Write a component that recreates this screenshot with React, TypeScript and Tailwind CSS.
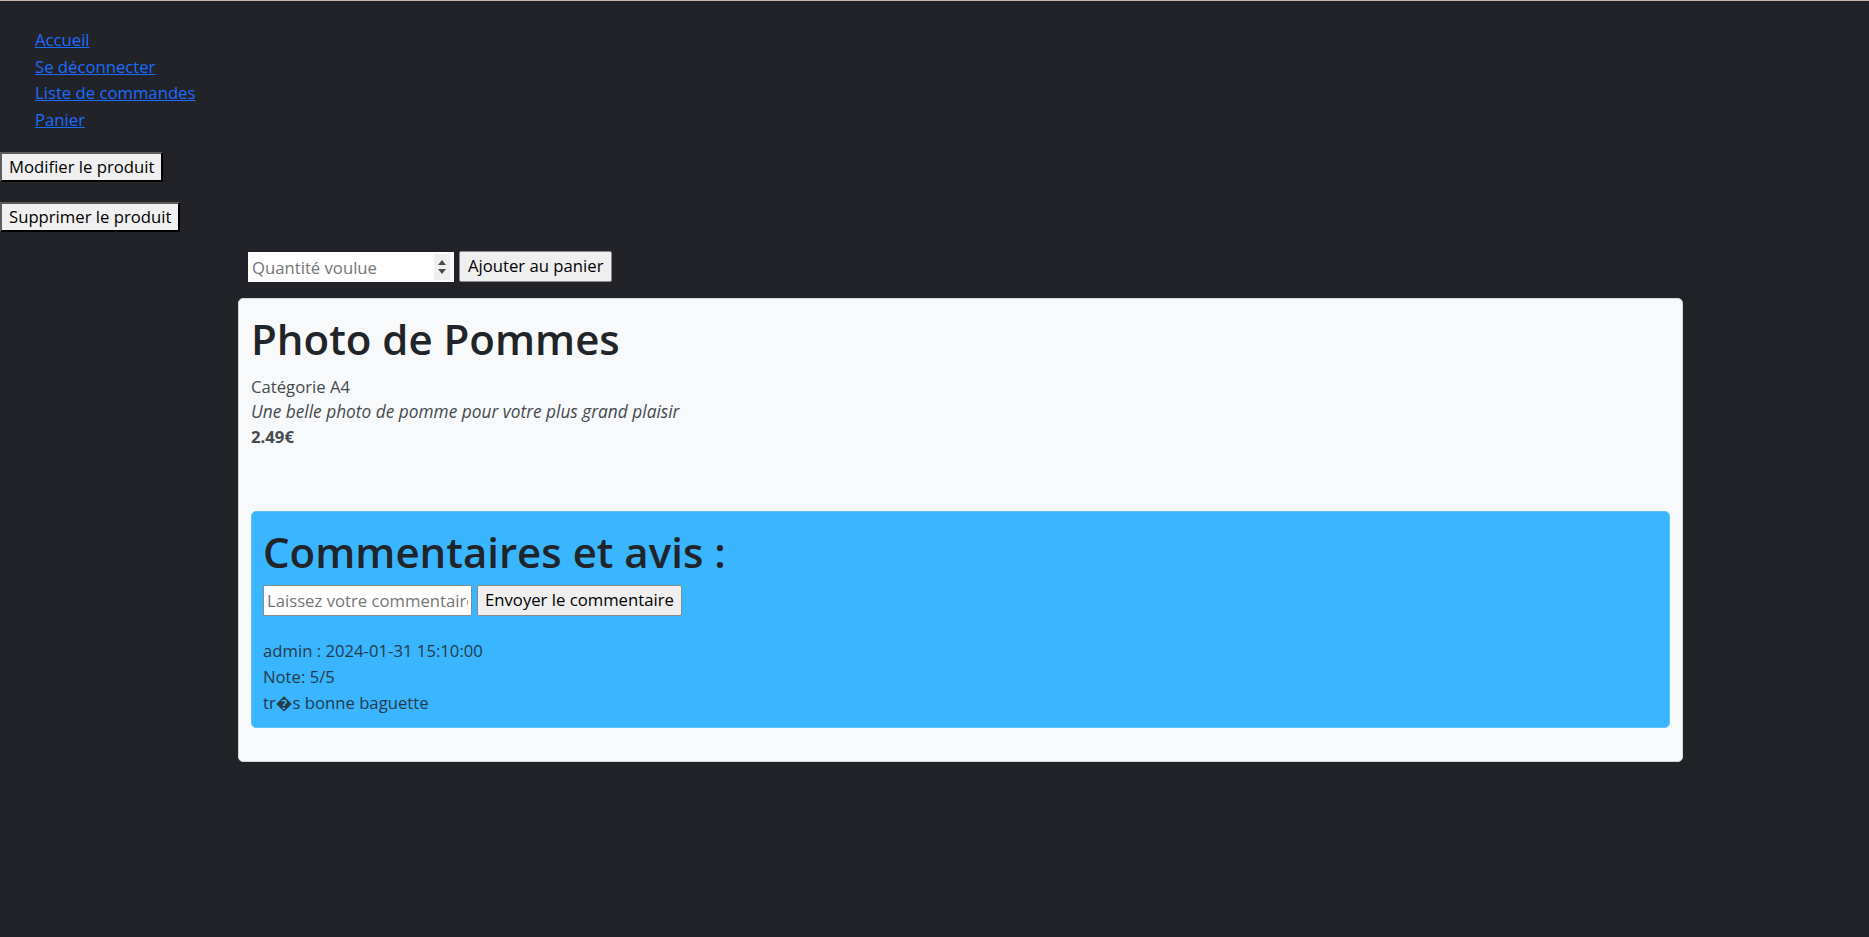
export default function App() {
  return (
    <div className="min-h-screen bg-[#222329] border-t border-[#c9b5ae] font-['Open_Sans',sans-serif] text-[16.7px] leading-[26.5px] text-[#212529]">
      <ul className="pt-[26px] pl-[35px] mb-[19px]">
        <li><a href="#" className="text-[#1a6dfd] underline">Accueil</a></li>
        <li><a href="#" className="text-[#1a6dfd] underline">Se déconnecter</a></li>
        <li><a href="#" className="text-[#1a6dfd] underline">Liste de commandes</a></li>
        <li><a href="#" className="text-[#1a6dfd] underline">Panier</a></li>
      </ul>

      <form className="mb-[20px]">
        <button type="button" className="h-[30px] px-[7px] bg-[#f0f0f0] text-black border-2 border-t-[#5c5c5c] border-l-[#5c5c5c] border-r-black border-b-black leading-none">
          Modifier le produit
        </button>
      </form>
      <form className="mb-[20px]">
        <button type="button" className="h-[30px] px-[7px] bg-[#f0f0f0] text-black border-2 border-t-[#5c5c5c] border-l-[#5c5c5c] border-r-black border-b-black leading-none">
          Supprimer le produit
        </button>
      </form>

      <div className="ml-[238px] w-[1445px]">
        <form className="ml-[10px] mb-[16px] flex gap-[5px]">
          <div className="relative w-[206px] h-[30px] bg-white">
            <input
              type="text"
              placeholder="Quantité voulue"
              className="w-full h-full pl-[4px] pr-[20px] bg-white outline-none placeholder:text-[#757575]"
            />
            <div className="absolute right-[4px] top-[2px] w-[16px] h-[26px] bg-[#efefef] flex flex-col items-center justify-center gap-[4px]">
              <svg width="8" height="5" viewBox="0 0 8 5"><path d="M4 0L8 5H0z" fill="#4a4a4a" /></svg>
              <svg width="8" height="5" viewBox="0 0 8 5"><path d="M0 0H8L4 5z" fill="#4a4a4a" /></svg>
            </div>
          </div>
          <button type="button" className="h-[31px] -mt-[1px] px-[8px] bg-[#efefef] text-black border border-[#8a8a8a] rounded-[2px] leading-none">
            Ajouter au panier
          </button>
        </form>

        <div className="bg-[#f8f9fa] border border-[#d4d5d6] rounded-[5px] pt-[14px] px-[12px] pb-[33px]">
          <h1 className="text-[42px] leading-[52px] font-semibold mb-[9px]">Photo de Pommes</h1>
          <div className="text-[#444a50] leading-[25px]">
            <p>Catégorie A4</p>
            <p className="italic text-[17.3px]">Une belle photo de pomme pour votre plus grand plaisir</p>
            <p className="font-bold">2.49€</p>
          </div>

          <div className="mt-[62px] bg-[#39b6ff] rounded-[5px] border border-[#5ec3fd] pt-[14px] px-[11px] pb-[11px]">
            <h1 className="text-[42px] leading-[52px] font-semibold mb-[7px]">Commentaires et avis :</h1>
            <form className="flex gap-[5px] mb-[22px]">
              <input
                type="text"
                placeholder="Laissez votre commentaire"
                className="w-[209px] h-[31px] px-[3px] bg-white border border-[#8a8a8a] rounded-[2px] outline-none placeholder:text-[#757575]"
              />
              <button type="button" className="h-[31px] px-[7px] bg-[#efefef] text-black border border-[#8a8a8a] rounded-[2px] leading-none">
                Envoyer le commentaire
              </button>
            </form>
            <div className="text-[#273a4a] leading-[26px]">
              <p>admin : 2024-01-31 15:10:00</p>
              <p>Note: 5/5</p>
              <p>tr�s bonne baguette</p>
            </div>
          </div>
        </div>
      </div>
    </div>
  );
}
